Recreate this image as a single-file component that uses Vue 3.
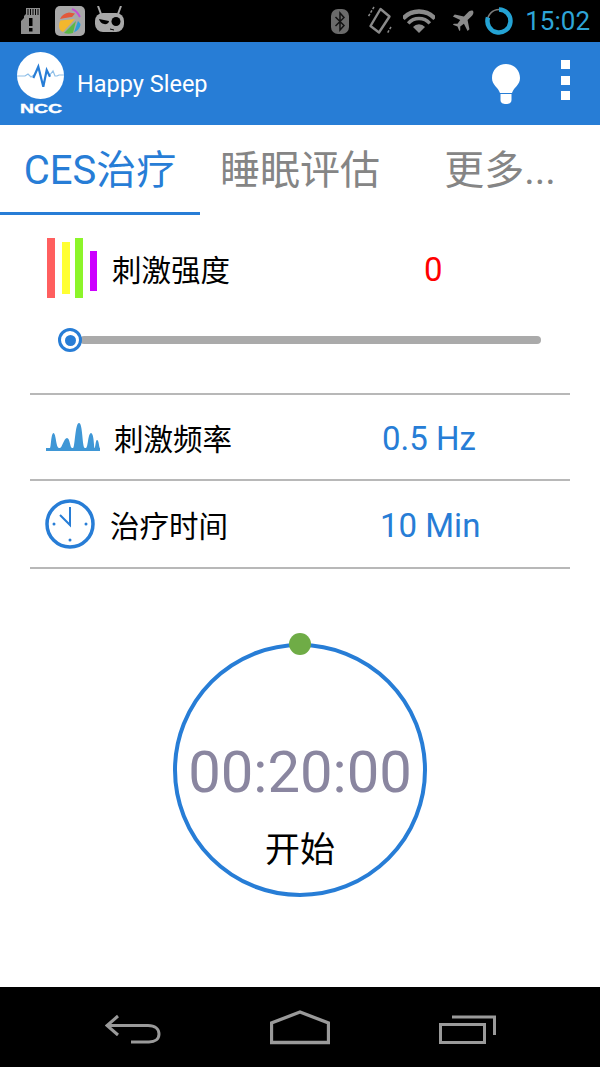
<script setup>
const tabs = [
  { text: "CES治疗", active: true },
  { text: "睡眠评估", active: false },
  { text: "更多...", active: false }
];
const bars = [
  { x: 0, y: 0, h: 60, w: 8, c: "#ff5f5f" },
  { x: 15, y: 4, h: 52, w: 8, c: "#ffff33" },
  { x: 28, y: 0, h: 60, w: 8, c: "#8cf52a" },
  { x: 43, y: 13, h: 40, w: 7, c: "#cc00ff" }
];
</script>

<template>
  <div class="screen">
    <div class="status">
      <div class="status-left">
        <svg class="sd" width="19" height="26" viewBox="0 0 19 26">
          <path d="M5 0H19V26H0V13L3 10V8L5 6Z" fill="#8e8e8e"/>
          <path d="M7 1V7M9.500 1V7M12 1V7M14.500 1V7M17 1V7" stroke="#000" stroke-width="1"/>
          <path d="M8 10H11.500V18H8ZM8 20H11.500V23.500H8Z" fill="#000"/>
        </svg>
        <svg class="market" width="30" height="30" viewBox="0 0 30 30">
          <rect width="30" height="30" rx="5" fill="#a8a8a8"/>
          <path d="M5 13C7 9 10 7 14 6.500L20 7.500L17 11C14 11 10 12 5 13Z" fill="#e2583a"/>
          <path d="M4 20C4 18 4.500 16 5.500 14.500L20 13L8 26C5 25 4 22 4 20Z" fill="#f3b72e"/>
          <path d="M9 27L21 15L18 27C15 28 12 28 9 27Z" fill="#5cb947"/>
          <path d="M19 26.500L23 15L25.500 18C25.500 22 22 25 19 26.500Z" fill="#2f9ed8"/>
          <path d="M17 3C20 4 23 7 25 11" stroke="#c34fd6" stroke-width="2" fill="none"/>
        </svg>
        <svg class="cid" width="29" height="26" viewBox="0 0 29 26">
          <path d="M3 0L6 8M26 0L23 8" stroke="#a8a8a8" stroke-width="2"/>
          <rect x="0" y="7" width="29" height="19" rx="8" fill="#a8a8a8"/>
          <path d="M4 13L14 15C14 19 6 20 4 13Z" fill="#000"/>
          <circle cx="21" cy="15.500" r="4.500" fill="#000"/>
          <path d="M15 23L19 24" stroke="#000" stroke-width="1"/>
        </svg>
      </div>
      <div class="status-right">
        <svg width="18" height="25" viewBox="0 0 18 25">
          <rect width="18" height="25" rx="7" fill="#6a6a6a"/>
          <path d="M4.500 8L13 16.500L9 21V4L13 8.500L4.500 17" stroke="#111" stroke-width="1.500" fill="none"/>
        </svg>
        <svg class="rotate" width="24" height="30" viewBox="0 0 24 30">
          <path d="M12.500 3L21.500 10.500L11 26.500L2.500 20Z" fill="none" stroke="#8a8a8a" stroke-width="2.400" stroke-linejoin="round"/>
          <path d="M6 1L0 11M23 21L19.500 27" stroke="#8a8a8a" stroke-width="1.500" stroke-dasharray="2.500 1.500"/>
        </svg>
        <svg class="wifi" width="32" height="24" viewBox="0 0 32 24">
          <path d="M0 9.600A21.500 21.500 0 0 1 32 9.600" fill="none" stroke="#8a8a8a" stroke-width="4.400"/>
          <path d="M5.200 14.300A14.500 14.500 0 0 1 26.800 14.300" fill="none" stroke="#8a8a8a" stroke-width="3.400"/>
          <path d="M16 24L10 18A8 8 0 0 1 22 18Z" fill="#8a8a8a"/>
        </svg>
        <svg class="plane" width="22" height="22" viewBox="0 0 24 24">
          <path d="M23 1C21 0 19 1 17 3L13 7L3 5L1 7L9 11L6 15L2 15L1 16L6 18L8 23L9 22L9 18L13 15L17 23L19 21L17 11L21 7C23 5 24 3 23 1Z" fill="#8a8a8a"/>
        </svg>
        <svg class="battery" width="28" height="28" viewBox="0 0 28 28">
          <circle cx="14" cy="14" r="11.500" fill="none" stroke="#7a7a7a" stroke-width="1.500"/>
          <path d="M14 2.500A11.500 11.500 0 1 1 3 10.500" fill="none" stroke="#24a3d4" stroke-width="4.500"/>
        </svg>
        <span class="clock">15:02</span>
      </div>
    </div>

    <header class="appbar">
      <svg class="logo" width="50" height="66" viewBox="0 0 50 66">
        <circle cx="24.500" cy="24.500" r="23.500" fill="#fff"/>
        <path d="M1 25H9L12 23L15 26L18 24" fill="none" stroke="#8fbfe8" stroke-width="1.200"/>
        <path d="M33 25L37 20L39 25H41L43 24H48" fill="none" stroke="#8fbfe8" stroke-width="1.200"/>
        <path d="M17.300 27L22.300 15.700L27.300 35.700L30.700 19L34 25.700" fill="none" stroke="#277dd6" stroke-width="2.200"/>
        <text x="4" y="62" textLength="42" lengthAdjust="spacingAndGlyphs" class="ncc">NCC</text>
      </svg>
      <span class="title">Happy Sleep</span>
      <svg class="bulb" width="28" height="40" viewBox="0 0 28 40">
        <path d="M14 0C6 0 0 6 0 14C0 21 6 23 8 29H20C22 23 28 21 28 14C28 6 22 0 14 0Z" fill="#fff"/>
        <path d="M8.500 30H19.500V36C19.500 39 17 40 14 40C11 40 8.500 39 8.500 36Z" fill="#fff"/>
      </svg>
      <div class="dots"><i></i><i></i><i></i></div>
    </header>

    <nav class="tabs">
      <div v-for="tab in tabs" :key="tab.text" class="tab" :class="{ active: tab.active }">{{ tab.text }}</div>
    </nav>

    <main class="content">
      <section class="intensity">
        <div class="intensity-row">
          <svg class="bars" width="52" height="60" viewBox="0 0 52 60">
            <rect v-for="b in bars" :key="b.c" :x="b.x" :y="b.y" :width="b.w" :height="b.h" :fill="b.c"/>
          </svg>
          <span class="label">刺激强度</span>
          <span class="red">0</span>
        </div>
        <div class="slider">
          <div class="thumb"><i></i></div>
          <div class="track"></div>
        </div>
      </section>

      <div class="row freq">
        <svg width="54" height="28" viewBox="0 0 54 28">
          <path d="M0 28V25H4C5 25 5 10 7.500 10C10 10 10 25 13 25H14C16 25 18 15 21 15C24 15 24 25 26 25H27C29 25 29 0 33 0C37 0 36 25 39 25H40C42 25 42 10 45 10C48 10 48 25 48.500 25C49.500 25 49.500 17 51 17C53 17 53 25 54 25V28Z" fill="#3f97d6"/>
        </svg>
        <span class="label">刺激频率</span>
        <span class="value">0.5 Hz</span>
      </div>

      <div class="row time">
        <svg width="50" height="50" viewBox="0 0 50 50">
          <circle cx="25" cy="25" r="23" fill="none" stroke="#277dd6" stroke-width="3.500"/>
          <path d="M25 8V26L15 16" fill="none" stroke="#277dd6" stroke-width="2"/>
          <circle cx="9" cy="25" r="1.500" fill="#277dd6"/>
          <circle cx="41" cy="25" r="1.500" fill="#277dd6"/>
          <circle cx="25" cy="41" r="1.500" fill="#277dd6"/>
        </svg>
        <span class="label">治疗时间</span>
        <span class="value">10 Min</span>
      </div>

      <div class="timer-wrap">
        <div class="timer">
          <i class="knob"></i>
          <div class="digits">00:20:00</div>
          <div class="start">开始</div>
        </div>
      </div>
    </main>

    <footer class="navbar">
      <svg width="56" height="36" viewBox="0 0 56 36">
        <path d="M13 7L2 16.500L13 26M2 16.500H43C50 16.500 54 20 54 25C54 30 50 33 44 33H26" fill="none" stroke="#9a9a9a" stroke-width="3"/>
      </svg>
      <svg width="60" height="36" viewBox="0 0 60 36">
        <path d="M1.500 33.500V14L30 3L58.500 14V33.500Z" fill="none" stroke="#9a9a9a" stroke-width="3.300"/>
      </svg>
      <svg width="58" height="36" viewBox="0 0 58 36">
        <path d="M13 8H55.500V26M1.500 15.500H45.500V33.500H1.500Z" fill="none" stroke="#9a9a9a" stroke-width="3"/>
      </svg>
    </footer>
  </div>
</template>

<style scoped>
.screen { width: 600px; height: 1067px; display: flex; flex-direction: column; background: #fff; font-family: Roboto, "Noto Sans CJK SC", sans-serif; overflow: hidden; }
.status { height: 42px; background: #000; display: flex; align-items: center; justify-content: space-between; padding: 0 10px 0 21px; }
.status-left { display: flex; align-items: center; }
.sd { margin-right: 15px; }
.market { margin-right: 10px; }
.cid { margin-top: -4px; }
.status-right { display: flex; align-items: center; }
.rotate { margin-left: 19px; }
.wifi { margin-left: 11px; }
.plane { margin-left: 17px; }
.battery { margin-left: 11px; }
.clock { margin-left: 12px; font-size: 26px; color: #2ea5d8; }
.appbar { height: 83px; background: #277dd6; display: flex; align-items: center; padding: 0 30px 0 16px; }
.logo { margin-top: 1px; }
.ncc { font-family: "Liberation Sans", sans-serif; font-weight: 700; font-size: 13.500px; fill: #fff; stroke: #fff; stroke-width: 0.4px; }
.title { margin-left: 11px; font-size: 23.500px; color: #fff; flex: 1; }
.bulb { margin-right: 41px; }
.dots { display: flex; flex-direction: column; gap: 6.500px; margin-bottom: 7px; }
.dots i { width: 9px; height: 9px; background: #fff; display: block; }
.tabs { height: 90px; display: flex; }
.tab { width: 200px; height: 90px; box-sizing: border-box; padding-top: 20px; text-align: center; font-size: 40px; line-height: 52px; color: #858585; }
.tab.active { color: #277dd6; border-bottom: 3px solid #277dd6; }
.content { flex: 1; display: flex; flex-direction: column; padding: 0 30px; }
.intensity { height: 180px; border-bottom: 2px solid #b8b8b8; box-sizing: border-box; }
.intensity-row { display: flex; align-items: center; padding: 23px 0 0 17px; }
.bars { margin-right: 13px; }
.label { font-size: 29.500px; color: #000; }
.red { font-size: 33px; color: #f00; margin-left: 194px; padding-top: 3px; }
.slider { display: flex; align-items: center; margin: 30px 29px 0 28px; }
.thumb { width: 24px; height: 24px; border: 3px solid #277dd6; box-sizing: border-box; border-radius: 50%; background: #fff; display: flex; align-items: center; justify-content: center; position: relative; z-index: 1; }
.thumb i { width: 11px; height: 11px; border-radius: 50%; background: #277dd6; display: block; }
.track { flex: 1; height: 8px; border-radius: 4px; background: #aaa; margin-left: -2px; }
.row { display: flex; align-items: center; border-bottom: 2px solid #b8b8b8; box-sizing: border-box; }
.freq { height: 86px; padding-left: 16px; }
.freq .label { margin-left: 14px; }
.time { height: 88px; padding-left: 15px; }
.time .label { margin-left: 15px; }
.value { font-size: 33px; color: #277dd6; padding-top: 3px; }
.freq .value { margin-left: 150px; }
.time .value { margin-left: 152px; }
.timer-wrap { flex: 1; display: flex; justify-content: center; padding-top: 74px; }
.timer { width: 254px; height: 254px; box-sizing: border-box; border: 4px solid #277dd6; border-radius: 50%; position: relative; text-align: center; }
.knob { position: absolute; top: -14px; left: 50%; margin-left: -11px; width: 22px; height: 22px; border-radius: 50%; background: #6fac46; display: block; }
.digits { margin-top: 91px; font-size: 58px; line-height: 68px; color: #8a86a0; }
.start { margin-top: 20px; font-size: 35px; line-height: 50px; color: #000; }
.navbar { height: 80px; background: #000; display: flex; align-items: center; padding: 0 103px 0 105px; justify-content: space-between; }
</style>

<style>
html, body { margin: 0; background: #fff; }
</style>
